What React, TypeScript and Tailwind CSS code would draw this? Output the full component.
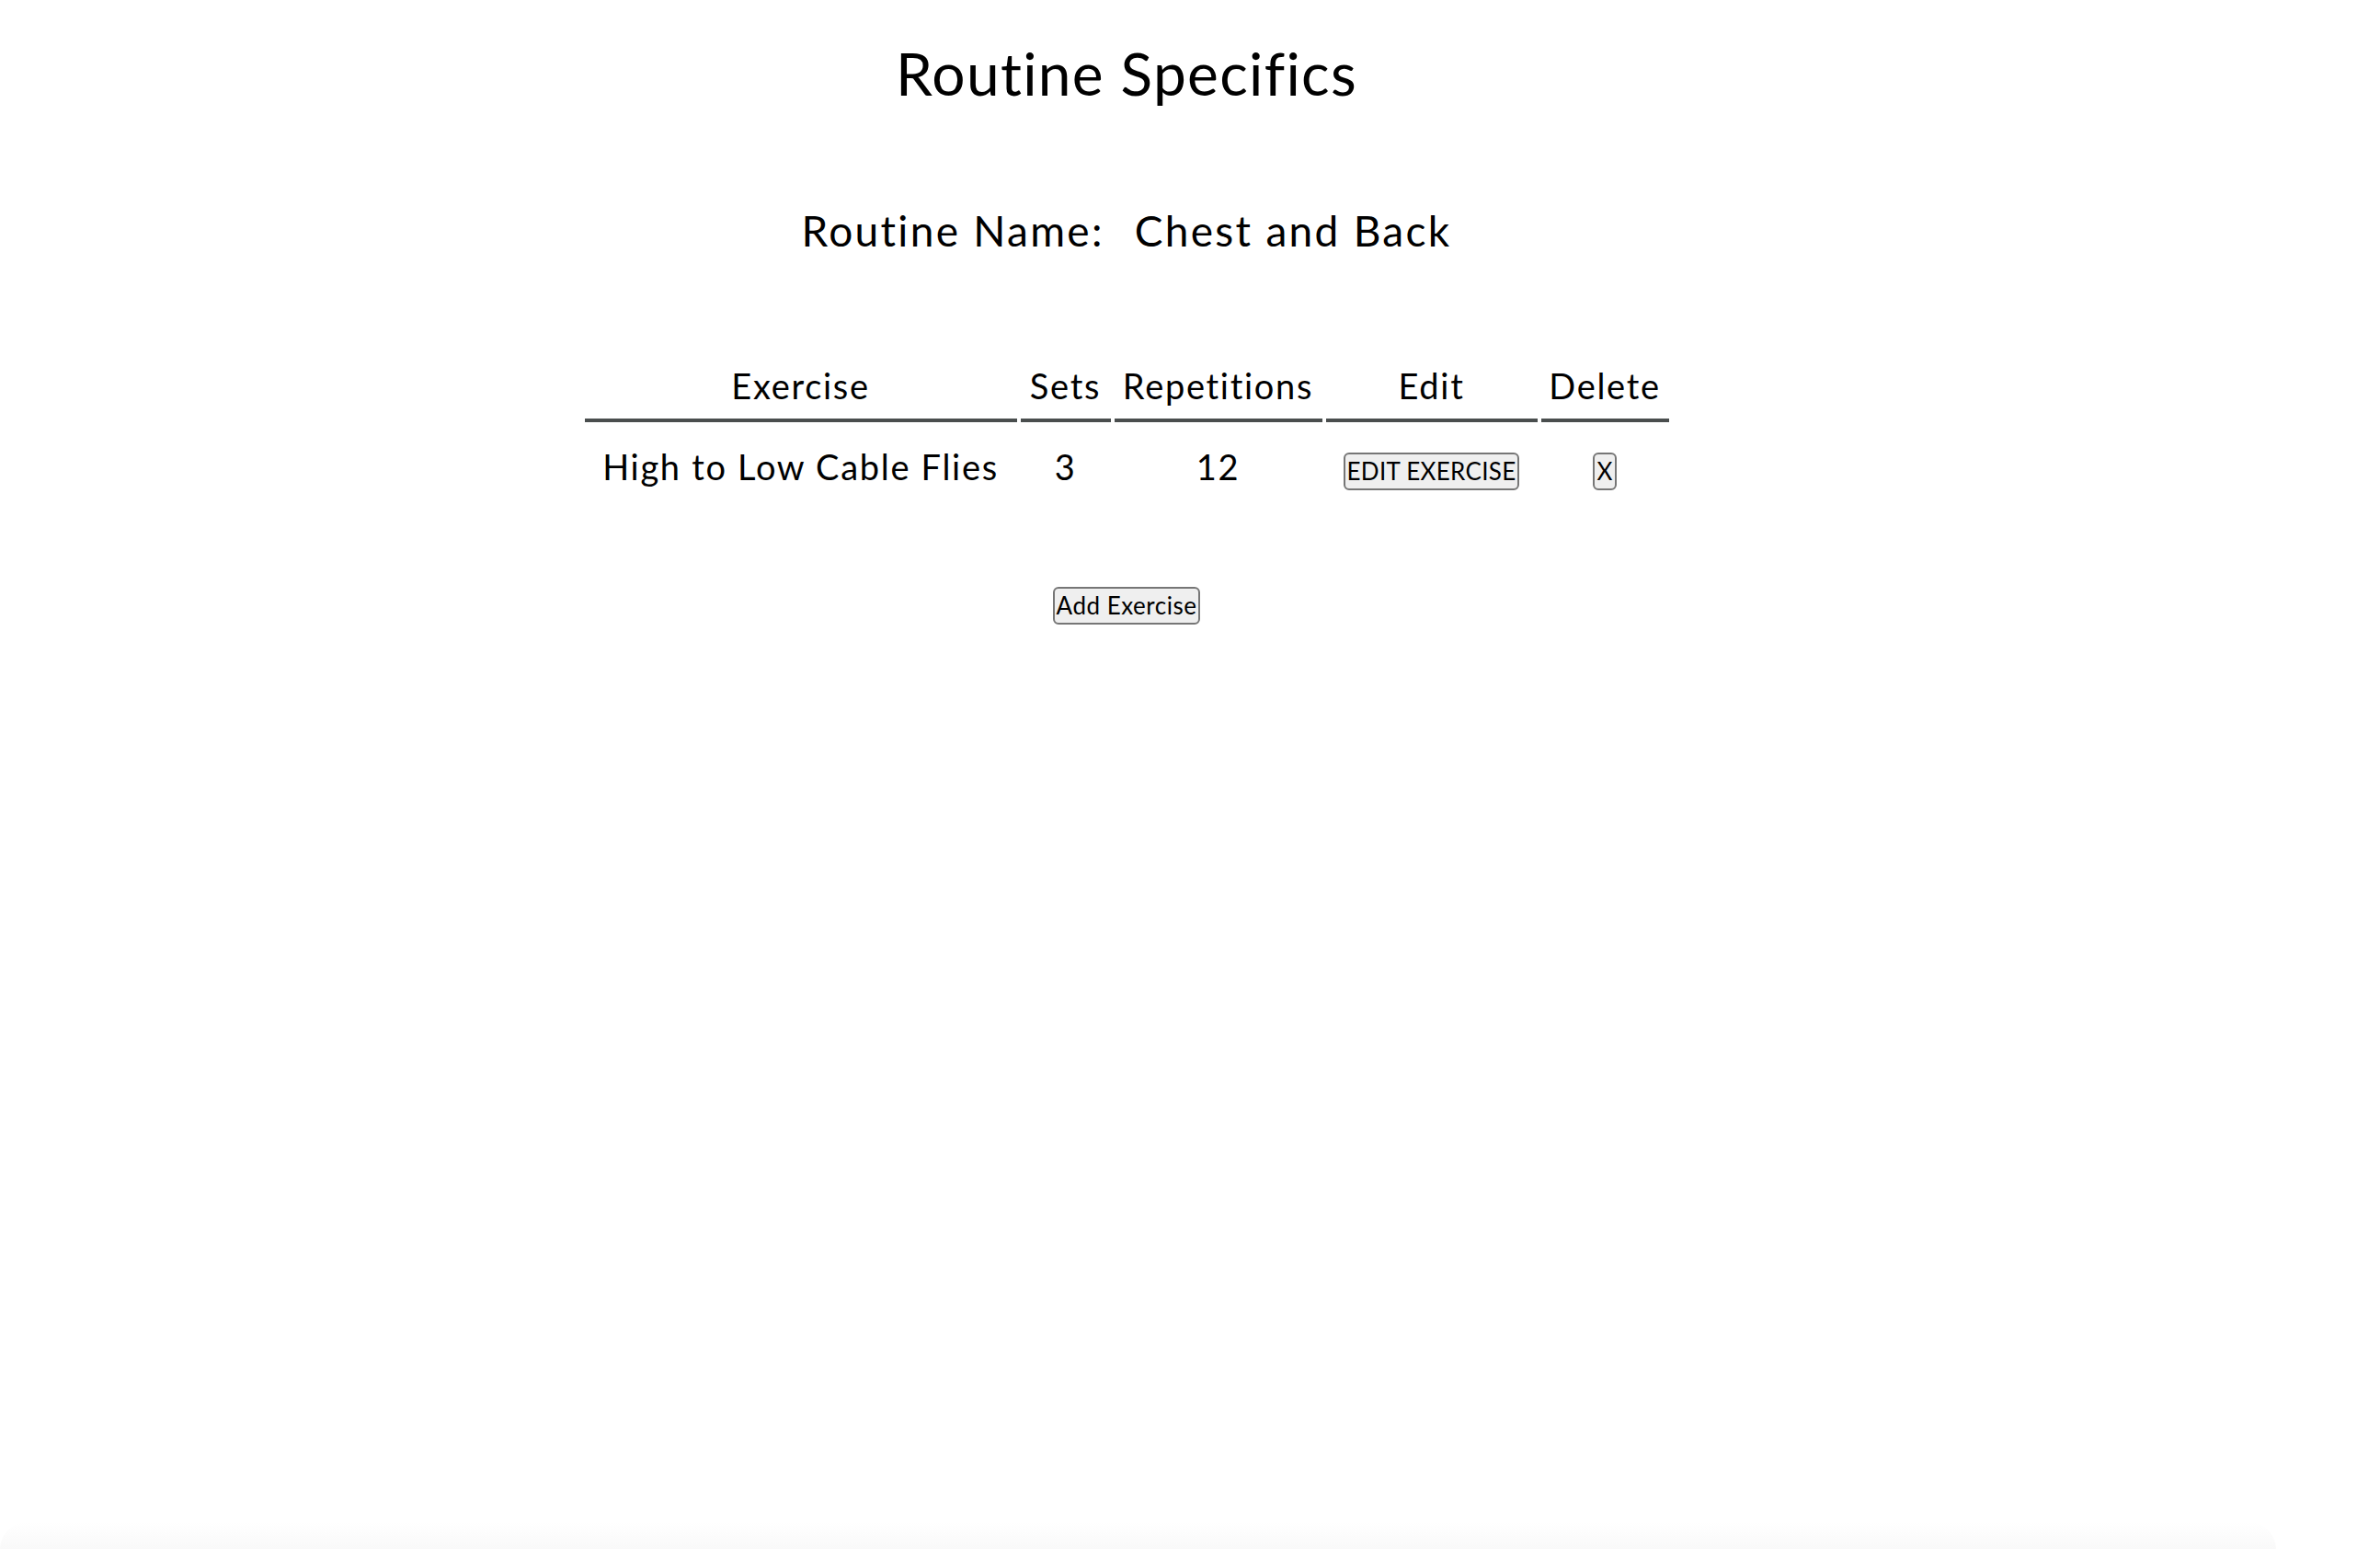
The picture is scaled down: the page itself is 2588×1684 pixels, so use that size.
import { useState } from "react"

interface Exercise {
  id: number
  name: string
  sets: number
  reps: number
}

const columns = [
  { label: "Exercise", width: "w-[470px]" },
  { label: "Sets", width: "w-[98px]" },
  { label: "Repetitions", width: "w-[226px]" },
  { label: "Edit", width: "w-[230px]" },
  { label: "Delete", width: "w-[139px]" },
]

const btn =
  "bg-[#efefef] border-2 border-[#767676] rounded-[6px] px-[2px] py-[3px] text-[26px] leading-[1.2] tracking-[0.3px] text-black"

const cell = "align-baseline text-[38px] leading-[1.2] tracking-[1.7px] pt-[22px]"

export default function App() {
  const [exercises] = useState<Exercise[]>([
    { id: 1, name: "High to Low Cable Flies", sets: 3, reps: 12 },
  ])

  return (
    <div
      className="flex flex-col h-[1684px] bg-white text-black [font-variant-ligatures:none]"
      style={{ fontFamily: "Lato, 'Open Sans', sans-serif" }}
    >
      <div className="w-[2450px] flex flex-col items-center text-center">
        <h1 className="pt-[42px] text-[64px] leading-[1.2] tracking-[1.3px] font-normal">
          Routine Specifics
        </h1>

        <div className="mt-[104px] flex justify-center gap-[33px] text-[46px] leading-[1.2] tracking-[2.3px]">
          <span>Routine Name:</span>
          <span>Chest and Back</span>
        </div>

        <table className="mt-[115px] table-fixed border-separate border-spacing-[4px] w-[1187px]">
          <thead>
            <tr>
              {columns.map((col) => (
                <th
                  key={col.label}
                  className={`${col.width} font-normal text-[38px] leading-[1.2] tracking-[1.7px] pb-[12px] border-b-4 border-[#4a4e4e]`}
                >
                  {col.label}
                </th>
              ))}
            </tr>
          </thead>
          <tbody>
            {exercises.map((ex) => (
              <tr key={ex.id}>
                <td className={cell}>{ex.name}</td>
                <td className={cell}>{ex.sets}</td>
                <td className={cell}>{ex.reps}</td>
                <td className="align-baseline pt-[22px]">
                  <button className={btn}>EDIT EXERCISE</button>
                </td>
                <td className="align-baseline pt-[22px]">
                  <button className={btn}>X</button>
                </td>
              </tr>
            ))}
          </tbody>
        </table>

        <div className="mt-[101px]">
          <button className={`${btn} tracking-[0.5px]`}>Add Exercise</button>
        </div>
      </div>

      <div className="flex-1" />
      {/* faint edge at the bottom of the window */}
      <div className="h-[29px] w-[2475px] rounded-t-[40px] bg-gradient-to-b from-white to-[#f9f9f9]" />
    </div>
  )
}
